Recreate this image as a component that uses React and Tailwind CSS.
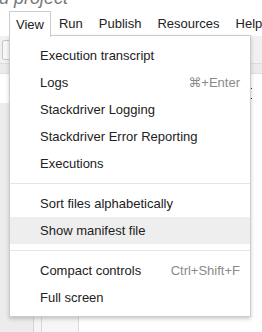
import React from 'react';

const TOP_ITEMS = [
  { label: 'Execution transcript' },
  { label: 'Logs', shortcut: '⌘+Enter' },
  { label: 'Stackdriver Logging' },
  { label: 'Stackdriver Error Reporting' },
  { label: 'Executions' },
];

function MenuItem({ label, shortcut, active }) {
  return (
    <div className={`h-[27px] flex items-center justify-between pl-[30px] pr-[10px] ${active ? 'bg-[#eeeeee]' : ''}`}>
      <span className="text-[#222]">{label}</span>
      {shortcut && <span className="text-[#8a8a8a]">{shortcut}</span>}
    </div>
  );
}

function Separator() {
  return <div className="my-[6px] h-px bg-[#e6e6e6]" />;
}

export default function App() {
  return (
    <div className="relative w-[262px] h-[332px] overflow-hidden bg-white text-[13px] font-['Liberation_Sans','DejaVu_Sans',sans-serif]">
      {/* title, cut off at the top */}
      <div className="h-[11px] overflow-hidden">
        <div className="-mt-[11px] -ml-[52px] text-[18px] leading-none italic text-[#777] whitespace-nowrap">Untitled project</div>
      </div>

      {/* menu bar */}
      <div className="h-[25px] flex items-stretch pl-[9px] text-[#222] relative z-20">
        <div className="px-[6px] flex items-center bg-white border border-b-0 border-[#cccccc] h-[26px]">View</div>
        <div className="px-[8px] flex items-center">Run</div>
        <div className="px-[8px] flex items-center">Publish</div>
        <div className="px-[8px] flex items-center">Resources</div>
        <div className="px-[8px] flex items-center">Help</div>
      </div>

      {/* toolbar */}
      <div className="h-[38px] bg-[#f1f1f1] border-b border-[#e0e0e0] flex flex-col">
        <div className="h-[27px] flex items-center pl-[2px]">
          <div className="w-[20px] h-[20px] border border-[#c6c6c6] rounded-[2px] bg-[#f8f8f8] flex items-center justify-center text-[#333] text-[11px]">⋮</div>
        </div>
        <div className="flex-1 border-t border-[#dddddd] bg-[#ebebeb]" />
      </div>

      {/* editor area */}
      <div className="flex h-[260px]">
        <div className="w-[34px] flex flex-col">
          <div className="h-[29px] bg-white" />
          <div className="flex-1 bg-[#ececec] border-r border-[#d6d6d6]" />
        </div>
        <div className="w-[8px] bg-[#f4f4f4] border-r border-[#dadada]" />
        <div className="w-[37px] bg-[#f6f6f6] border-r border-[#dadada]" />
        <div className="flex-1 bg-white relative">
          <div className="absolute right-[10px] top-[14px] w-px h-px bg-[#333]" />
          <div className="absolute right-[10px] top-[24px] w-px h-px bg-[#333]" />
        </div>
      </div>

      {/* dropdown */}
      <div className="absolute left-[9px] top-[35px] w-[242px] z-10 bg-white border border-[#cccccc] shadow-[0_2px_4px_rgba(0,0,0,0.2)] pt-[6px] pb-[5px]">
        {TOP_ITEMS.map(item => (
          <MenuItem key={item.label} {...item} />
        ))}
        <Separator />
        <MenuItem label="Sort files alphabetically" />
        <MenuItem label="Show manifest file" active />
        <Separator />
        <MenuItem label="Compact controls" shortcut="Ctrl+Shift+F" />
        <MenuItem label="Full screen" />
      </div>
    </div>
  );
}
